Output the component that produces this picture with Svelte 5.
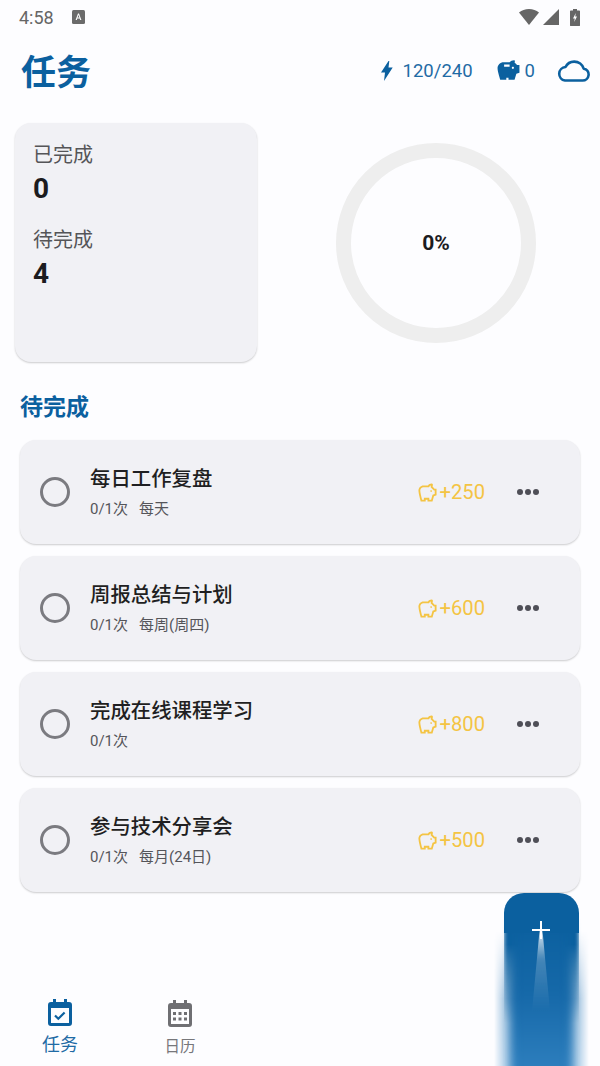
<script>
  const tasks = [
    { title: '每日工作复盘', repeat: '每天', reward: 250 },
    { title: '周报总结与计划', repeat: '每周(周四)', reward: 600 },
    { title: '完成在线课程学习', repeat: '', reward: 800 },
    { title: '参与技术分享会', repeat: '每月(24日)', reward: 500 }
  ];

  const pigOutline =
    'M15 10c0-.55.45-1 1-1s1 .45 1 1-.45 1-1 1-1-.45-1-1zM22 7.5v6.97l-2.82.94L17.5 21H12v-2h-2v2H4.5S2 12.54 2 9.5 4.46 4 7.5 4h5c.91-1.21 2.36-2 4-2 .83 0 1.5.67 1.5 1.5 0 .21-.04.4-.12.58-.14.34-.26.73-.32 1.15l2.27 2.27H22zm-2 2h-1L15.5 6c0-.65.09-1.29.26-1.91-.97.25-1.76.97-2.09 1.91H7.5C5.57 6 4 7.57 4 9.5c0 1.88 1.22 6.65 2.01 9.5H8v-2h6v2h2.01l1.55-5.15 2.44-.82V9.5z';
  const calendar = 'M5 0h3v3h8V0h3v3h2a3 3 0 0 1 3 3v18a3 3 0 0 1-3 3H3a3 3 0 0 1-3-3V6a3 3 0 0 1 3-3h2z';
</script>

<div class="page">
  <div class="status">
    <div class="status-left">
      <span class="time">4:58</span>
      <svg class="a-icon" viewBox="0 0 13 14" width="13" height="14">
        <rect width="13" height="14" rx="1.5" fill="#6b6b6b" />
        <path d="M3.6 10 6 3.6h1L9.4 10H8.2l-.5-1.5H5.3L4.8 10zM5.6 7.6h1.8L6.500 5z" fill="#fff" />
      </svg>
    </div>
    <div class="status-right">
      <svg width="20" height="16" viewBox="0 0 22 16" preserveAspectRatio="none"><path d="M0 3.500C3 1.200 6.800 0 11 0s8 1.200 11 3.500L11 16z" fill="#666" /></svg>
      <svg class="cell" width="16" height="16" viewBox="0 0 16 16"><path d="M16 0v16H0z" fill="#666" /></svg>
      <svg width="10" height="17" viewBox="0 0 10 17">
        <path d="M3 0h4v1.500h2.200a.8.8 0 0 1 .8.8v14a.8.8 0 0 1-.8.8H.8a.8.8 0 0 1-.8-.8v-14a.8.8 0 0 1 .8-.8H3z" fill="#666" />
        <path d="M5.800 4 3 9.400h1.800L4.200 13 7 7.600H5.200z" fill="#fff" />
      </svg>
    </div>
  </div>

  <header class="top">
    <h1>任务</h1>
    <div class="top-stats">
      <svg width="12" height="20" viewBox="0 0 12 20"><path d="M7.500 0 0 11.500h4L3 20l8.700-13.500H7.500L8.300 0z" fill="#0b609f" /></svg>
      <span class="energy">120/240</span>
      <svg class="pig" width="23" height="22" viewBox="1.500 2.500 21 19">
        <path d="M19.830 7.500l-2.270-2.270c.07-.42.18-.81.32-1.150C18.050 3.650 17.600 3 17 3c-1.640 0-3.090.79-4 2H7.500C4.460 5 2 7.460 2 10.500S4.500 21 4.500 21H10v-2h2v2h5.500l1.680-5.590L22 14.470V7.500h-2.170zM13 9H8V7h5v2zm3 2c-.55 0-1-.45-1-1s.45-1 1-1 1 .45 1 1-.45 1-1 1z" fill="#0b609f" />
      </svg>
      <span class="coins">0</span>
      <svg width="33" height="22" viewBox="0 0 33 22">
        <path d="M8 20.500h17.500a6 6 0 0 0 1.200-11.900C25.500 4.500 21.600 1.600 17.200 1.600c-3.800 0-7.100 2.100-8.700 5.400A6.800 6.800 0 0 0 8 20.500z" fill="none" stroke="#0b609f" stroke-width="2.600" stroke-linejoin="round" />
      </svg>
    </div>
  </header>

  <section class="summary">
    <div class="stat-card">
      <div class="stat-label">已完成</div>
      <div class="stat-value">0</div>
      <div class="stat-label second">待完成</div>
      <div class="stat-value">4</div>
    </div>
    <div class="ring">
      <span>0%</span>
    </div>
  </section>

  <h2>待完成</h2>

  <div class="task-list">
    {#each tasks as task}
      <div class="task">
        <span class="radio"></span>
        <div class="task-body">
          <div class="task-title">{task.title}</div>
          <div class="task-sub">
            <span>0/1次</span>
            {#if task.repeat}<span>{task.repeat}</span>{/if}
          </div>
        </div>
        <div class="reward">
          <svg width="19" height="19" viewBox="1.500 1.500 21 20" preserveAspectRatio="none"><path d={pigOutline} fill="#f4c443" /></svg>
          <span>+{task.reward}</span>
        </div>
        <div class="more"><i></i><i></i><i></i></div>
      </div>
    {/each}
  </div>

  <nav class="tabs">
    <div class="tab active">
      <svg width="24" height="27" viewBox="0 0 24 27">
        <path d={calendar} fill="#0b609f" />
        <rect x="3" y="9" width="18" height="15" fill="#fdfdff" />
        <path d="M7 16.500l3.300 3.200 6.300-6.200" fill="none" stroke="#0b609f" stroke-width="2.200" />
      </svg>
      <span>任务</span>
    </div>
    <div class="tab">
      <svg width="24" height="27" viewBox="0 0 24 27">
        <path d={calendar} fill="#6f6f73" />
        <rect x="3" y="9" width="18" height="15" fill="#fdfdff" />
        <g fill="#6f6f73">
          <rect x="5" y="12" width="3" height="3" /><rect x="10.500" y="12" width="3" height="3" /><rect x="16" y="12" width="3" height="3" />
          <rect x="5" y="17.500" width="3" height="3" /><rect x="10.500" y="17.500" width="3" height="3" /><rect x="16" y="17.500" width="3" height="3" />
        </g>
      </svg>
      <span>日历</span>
    </div>
  </nav>

  <div class="fab">
    <div class="fab-glow"></div>
    <div class="fab-edge"></div>
    <div class="fab-core"></div>
    <div class="fab-head"></div>
    <div class="fab-streak"></div>
    <svg class="plus" width="18" height="18" viewBox="0 0 18 18"><path d="M9 0v18M0 9h18" stroke="#fff" stroke-width="2" /></svg>
  </div>
</div>

<style>
  :global(body) {
    margin: 0;
    background: #fdfdff;
  }

  .page {
    position: relative;
    width: 600px;
    height: 1066px;
    overflow: hidden;
    display: flex;
    flex-direction: column;
    background: #fdfdff;
    font-family: Roboto, "Noto Sans CJK SC", sans-serif;
  }

  .status {
    height: 34px;
    padding: 0 20px 0 19px;
    display: flex;
    align-items: center;
    justify-content: space-between;
    flex-shrink: 0;
  }

  .status-left {
    display: flex;
    align-items: center;
    gap: 18px;
  }

  .time {
    font-size: 18px;
    color: #666;
  }

  .status-right {
    display: flex;
    align-items: center;
    gap: 4px;
  }

  .cell {
    margin-right: 7px;
  }

  .top {
    height: 74px;
    padding: 4px 10px 0 21px;
    box-sizing: border-box;
    display: flex;
    align-items: center;
    justify-content: space-between;
    flex-shrink: 0;
  }

  h1 {
    margin: 0;
    font-size: 35px;
    font-weight: 700;
    color: #0b609f;
    line-height: 1;
  }

  .top-stats {
    display: flex;
    align-items: center;
    margin-top: -4px;
    color: #0b609f;
    font-size: 18.500px;
  }

  .pig {
    margin-top: -2px;
  }

  .energy {
    margin-left: 10px;
    margin-right: 24px;
    color: #1f6ba5;
  }

  .coins {
    margin-left: 5px;
    margin-right: 22px;
    color: #1f6ba5;
  }

  .summary {
    margin-top: 15px;
    padding-left: 15px;
    display: flex;
    align-items: flex-start;
  }

  .stat-card {
    width: 242px;
    height: 239px;
    box-sizing: border-box;
    padding: 17px 18px;
    border-radius: 16px;
    background: #f1f1f5;
    box-shadow: 0 1px 2px rgba(0, 0, 0, 0.2);
  }

  .stat-label {
    font-size: 20px;
    line-height: 30px;
    color: #555558;
  }

  .stat-label.second {
    margin-top: 17px;
  }

  .stat-value {
    font-size: 28px;
    font-weight: 700;
    line-height: 38px;
    color: #1c1c1f;
  }

  .ring {
    margin: 20px 0 0 79px;
    width: 200px;
    height: 200px;
    box-sizing: border-box;
    border: 15px solid #eeeeee;
    border-radius: 50%;
    display: flex;
    align-items: center;
    justify-content: center;
    font-size: 21px;
    font-weight: 700;
    color: #1c1c1f;
  }

  h2 {
    margin: 29px 0 0 20px;
    font-size: 23px;
    line-height: 34px;
    font-weight: 700;
    color: #0b609f;
  }

  .task-list {
    margin: 15px 20px 0;
    display: flex;
    flex-direction: column;
    gap: 12px;
  }

  .task {
    height: 104px;
    padding: 0 41px 0 20px;
    display: flex;
    align-items: center;
    border-radius: 16px;
    background: #f1f1f5;
    box-shadow: 0 1px 2px rgba(0, 0, 0, 0.2);
  }

  .radio {
    width: 30px;
    height: 30px;
    box-sizing: border-box;
    border: 3px solid #7b7b80;
    border-radius: 50%;
    flex-shrink: 0;
  }

  .task-body {
    flex: 1;
    margin-left: 20px;
    padding-top: 1px;
  }

  .task-title {
    font-size: 20.400px;
    font-weight: 500;
    line-height: 29px;
    color: #1f1f22;
  }

  .task-sub {
    margin-top: 4px;
    display: flex;
    gap: 11px;
    font-size: 15px;
    line-height: 22px;
    color: #55555a;
  }

  .reward {
    display: flex;
    align-items: center;
    gap: 3px;
    font-size: 20.200px;
    color: #f4c443;
  }

  .more {
    margin-left: 32px;
    display: flex;
    gap: 2px;
  }

  .more i {
    width: 6px;
    height: 6px;
    border-radius: 50%;
    background: #4f4f57;
  }

  .tabs {
    margin-top: auto;
    display: flex;
  }

  .tab {
    width: 120px;
    height: 96px;
    padding-top: 30px;
    box-sizing: border-box;
    display: flex;
    flex-direction: column;
    align-items: center;
    gap: 7px;
    font-size: 15.500px;
    line-height: 26px;
    color: #77777b;
  }

  .tab.active {
    padding-top: 29px;
    gap: 6px;
    font-size: 18px;
    color: #1f6ba5;
  }

  .fab {
    position: absolute;
    left: 504px;
    top: 893px;
    width: 75px;
    height: 173px;
  }

  .fab-head {
    position: absolute;
    inset: 0 0 auto 0;
    height: 40px;
    background: #0b609f;
    border-radius: 20px 20px 0 0;
  }

  /* smeared tail under the button: hard edge near the top, soft lower down */
  .fab-edge {
    position: absolute;
    left: 0;
    right: 0;
    top: 30px;
    bottom: 0;
    background: #0b609f;
    filter: blur(2px);
    mask-image: linear-gradient(180deg, #000 15%, transparent 70%);
  }

  .fab-core {
    position: absolute;
    left: 8px;
    right: 8px;
    top: 30px;
    bottom: -10px;
    background: linear-gradient(180deg, #0b609f, #1568a8 45%, #2f80bf);
    filter: blur(5px);
  }

  .fab-glow {
    position: absolute;
    left: -10px;
    right: -10px;
    top: 38px;
    bottom: 0;
    background: linear-gradient(180deg, #1568a8, #1e70b0 50%, #3f8cc7);
    mask-image:
      linear-gradient(90deg, transparent, #000 30%, #000 70%, transparent),
      linear-gradient(180deg, transparent, #000 50%);
    mask-composite: intersect;
  }

  .fab-streak {
    position: absolute;
    left: 22px;
    width: 30px;
    top: 38px;
    height: 80px;
    background: linear-gradient(180deg, rgba(255, 255, 255, 0.85), rgba(255, 255, 255, 0.22) 35%, rgba(255, 255, 255, 0));
    clip-path: polygon(45% 0, 55% 0, 80% 100%, 20% 100%);
    filter: blur(2.500px);
  }

  .plus {
    position: absolute;
    left: 28px;
    top: 28px;
  }
</style>
